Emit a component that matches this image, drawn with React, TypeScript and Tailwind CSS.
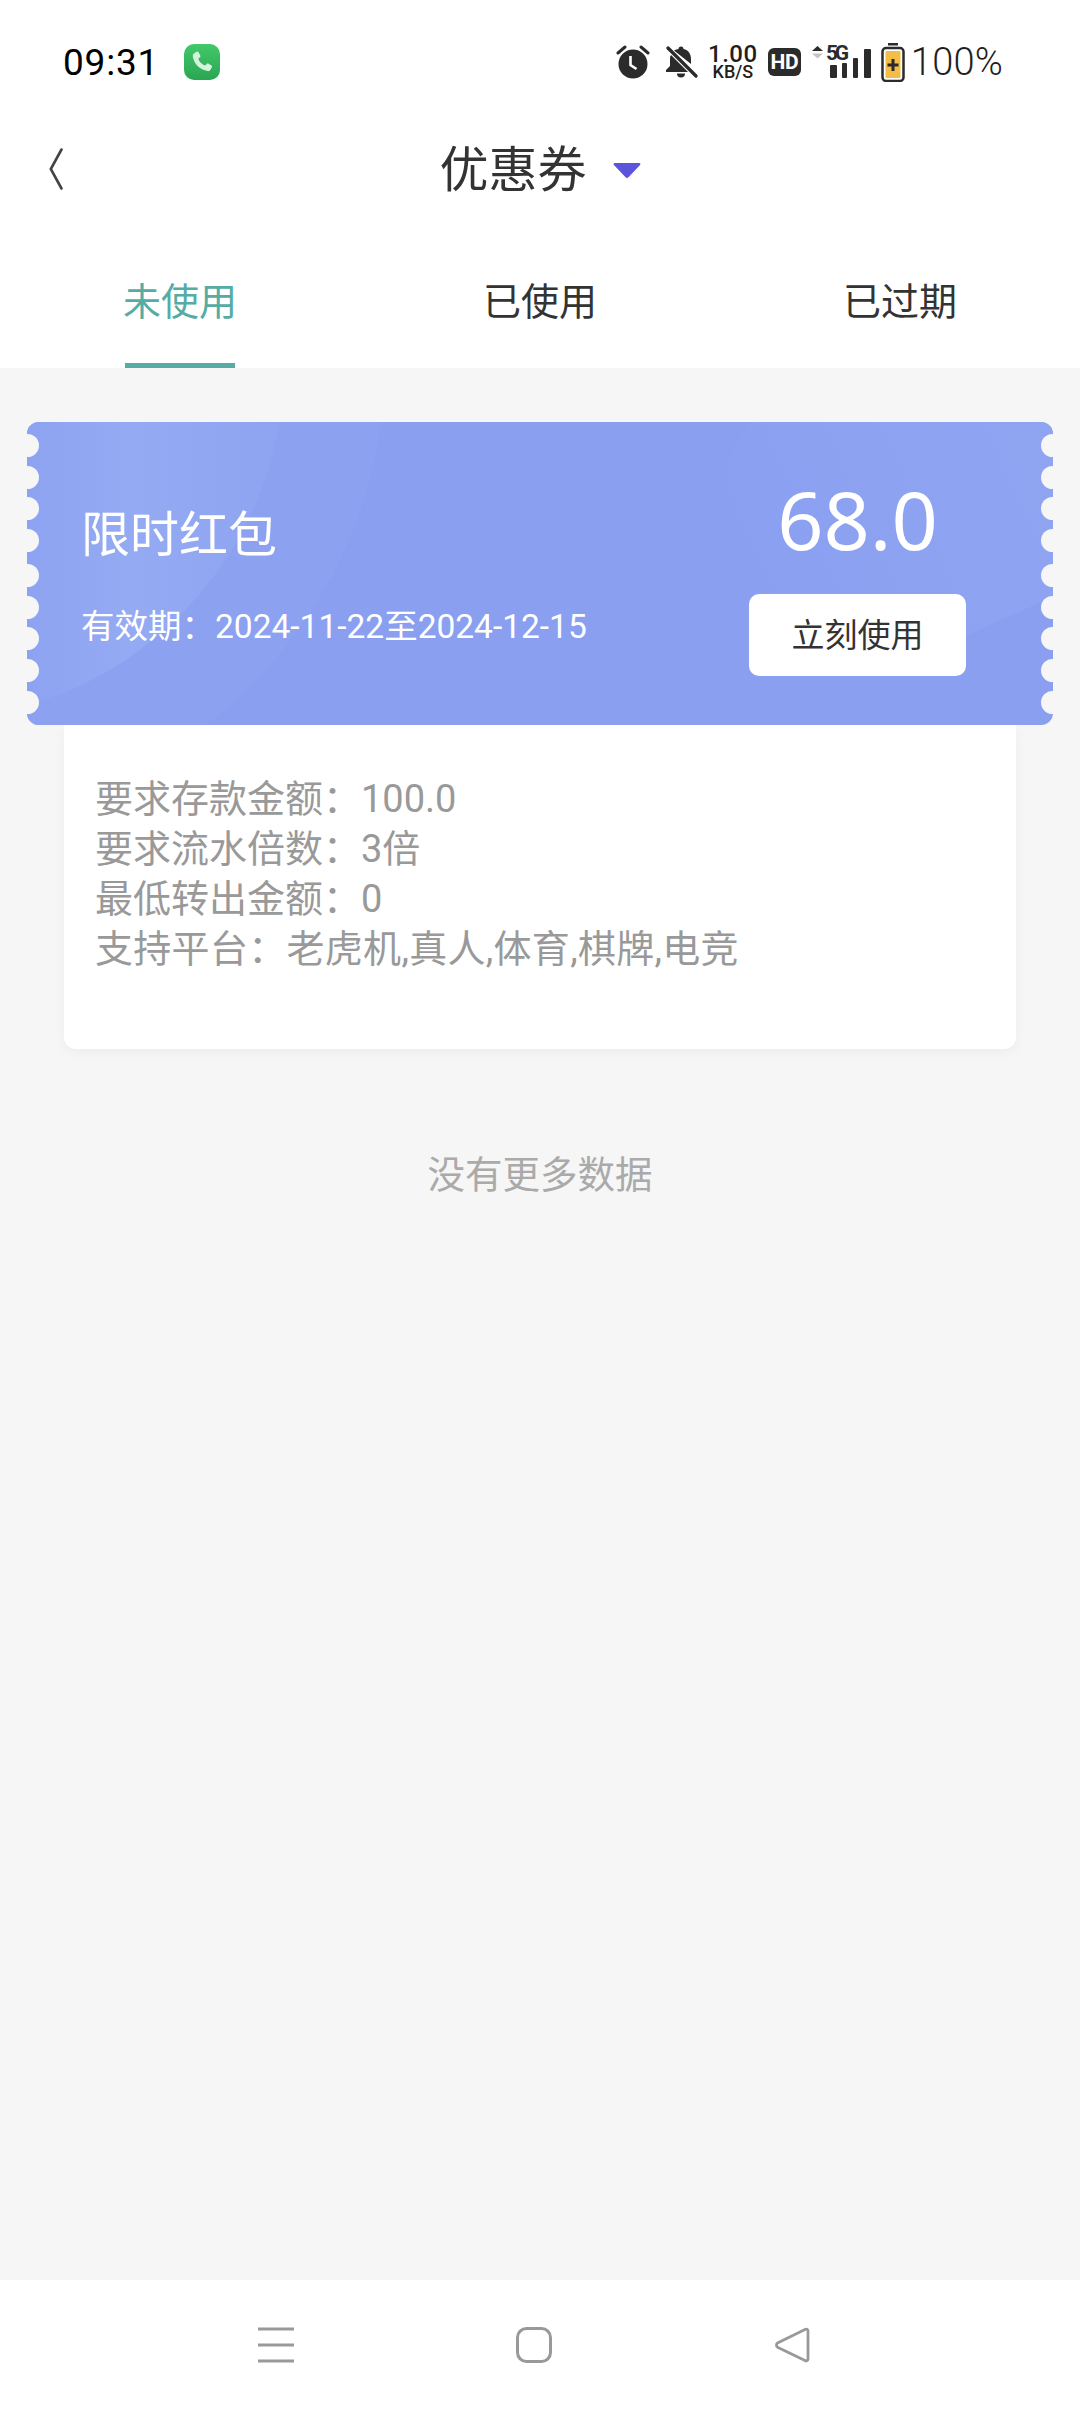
const scallops = [23, 55, 86, 118, 153, 185, 216, 248, 280];
const rules = [
  { text: "要求存款金额：100.0", tone: "tracking-normal" },
  { text: "要求流水倍数：3倍", tone: "tracking-normal" },
  { text: "最低转出金额：0", tone: "tracking-normal" },
  { text: "支持平台：老虎机,真人,体育,棋牌,电竞", tone: "tracking-[0.3px]" },
];

function StatusIcons() {
  return (
    <div className="flex items-center">
      {/* alarm clock */}
      <svg width="34" height="34" viewBox="0 0 34 34">
        <circle cx="17" cy="19" r="14.5" fill="#2b2b2b" />
        <path d="M14.5 11v9l6 4" fill="none" stroke="#fff" strokeWidth="2.6" />
        <path d="M2 8l7-6M32 8l-7-6" stroke="#2b2b2b" strokeWidth="3" strokeLinecap="round" />
      </svg>
      {/* muted bell */}
      <svg width="34" height="34" viewBox="0 0 34 34" className="ml-[15px]">
        <path d="M16 1.5a2.5 2.5 0 0 1 2.5 2.5c5 1 7.500 5 7.500 10v5L9 5.500C10.500 4.500 12 4 13.500 4A2.500 2.500 0 0 1 16 1.500zM6 10l17 17H1v-2l4-4v-8c0-1 .3-2 1-3zM12 28.500h8a4 4 0 0 1-8 0z" fill="#2b2b2b" />
        <path d="M3 3l28 28" stroke="#2b2b2b" strokeWidth="3.400" strokeLinecap="round" />
      </svg>
      <div className="ml-[10px] flex w-[48px] flex-col items-center font-['Roboto'] font-medium text-[#1f1f1f]">
        <span className="text-[24px] leading-[19px] tracking-[0.5px]">1.00</span>
        <span className="text-[18px] leading-[15px]">KB/S</span>
      </div>
      <div className="ml-[11px] flex h-[28px] w-[33px] items-center justify-center rounded-[6px] bg-[#2b2b2b] font-['Roboto'] text-[21px] leading-none font-bold tracking-[-0.5px] text-white">
        HD
      </div>
      {/* 5G with signal bars */}
      <svg width="62" height="36" viewBox="0 0 62 36" className="ml-[11px] overflow-visible">
        <path d="M0 7l5.500-5 5.500 5z" fill="#2b2b2b" />
        <path d="M0 9.500l5.500 5 5.500-5z" fill="#c4c4c4" />
        <text x="14" y="16" fontFamily="Roboto" fontWeight="700" fontSize="21" fill="#2b2b2b" textLength="23">5G</text>
        <rect x="18" y="21" width="7" height="13" rx="1" fill="#2b2b2b" />
        <rect x="30" y="19" width="5" height="15" rx="1" fill="#2b2b2b" />
        <rect x="41" y="14" width="5" height="20" rx="1" fill="#2b2b2b" />
        <rect x="52" y="5" width="7" height="29" rx="1" fill="#2b2b2b" />
      </svg>
      {/* charging battery */}
      <svg width="24" height="40" viewBox="0 0 24 40" className="ml-[7px]">
        <rect x="7" y="1" width="10" height="2.500" fill="#2b2b2b" />
        <rect x="1.500" y="6" width="21" height="33" rx="3.500" fill="#fff" stroke="#2b2b2b" strokeWidth="2.500" />
        <rect x="4.500" y="9" width="15" height="27" rx="1" fill="#f4bd45" />
        <path d="M12 17v12M6.500 23h11" stroke="#2b2b2b" strokeWidth="3" />
      </svg>
      <span className="ml-[6px] font-['Roboto'] text-[38px] leading-none font-light tracking-[0.2px] text-[#1f1f1f]">100%</span>
    </div>
  );
}

export default function App() {
  return (
    <div className="flex h-[2412px] w-[1080px] flex-col overflow-hidden bg-[#f6f6f6] font-['Roboto','Noto_Sans_CJK_SC',sans-serif]">
      <header className="bg-white">
        <div className="flex h-[124px] items-center justify-between pr-[77px] pl-[63px]">
          <div className="flex items-center">
            <span className="text-[37px] leading-none font-normal tracking-[0.8px] text-black">09:31</span>
            <div className="ml-[25px] flex h-[36px] w-[36px] items-center justify-center rounded-[10px] bg-gradient-to-b from-[#43c86a] to-[#2aa653]">
              <svg width="24" height="24" viewBox="0 0 24 24">
                <path d="M3.500 3.800 6.600 1.800c.8-.4 1.500-.2 1.900.5l1.800 3.200c.3.600.2 1.300-.3 1.700L8.300 8.400c.7 2.900 3.700 6 6.900 7l1.400-1.500c.5-.5 1.100-.6 1.700-.3l3.100 1.800c.7.400.9 1.200.5 1.900l-1.600 2.800c-.5.800-1.400 1.200-2.300 1C9.500 19.800 3.900 13.800 2.800 6.300c-.1-1 .1-1.900.7-2.500z" fill="#d5f2dc" />
              </svg>
            </div>
          </div>
          <StatusIcons />
        </div>

        <div className="relative flex h-[92px] items-center justify-center">
          <svg width="14" height="42" viewBox="0 0 14 42" className="absolute top-[24px] left-[49px]">
            <path d="M12.500 1.500 1.800 21l10.700 19.500" fill="none" stroke="#444" strokeWidth="2.600" strokeLinecap="round" />
          </svg>
          <span className="text-[49px] leading-none text-[#333]">优惠券</span>
          <svg width="28" height="17" viewBox="0 0 30 18" className="ml-[26px]">
            <path d="M2 1h26c1.300 0 1.900 1.300 1 2.200L16.300 16.500c-.7.700-1.900.7-2.600 0L1 3.200C.1 2.300.7 1 2 1z" fill="#5b54dc" />
          </svg>
        </div>

        <nav className="grid h-[152px] grid-cols-3 pt-[36px]">
          <div className="flex flex-col items-center justify-between">
            <span className="mt-[26px] text-[38px] leading-[48px] text-[#55aca4]">未使用</span>
            <span className="h-[5px] w-[110px] bg-[#55aca4]" />
          </div>
          <div className="flex justify-center">
            <span className="mt-[26px] text-[38px] leading-[48px] text-[#333]">已使用</span>
          </div>
          <div className="flex justify-center">
            <span className="mt-[26px] text-[38px] leading-[48px] text-[#333]">已过期</span>
          </div>
        </nav>
      </header>

      <main className="flex-1 px-[27px] pt-[54px]">
        <section className="relative h-[303px] rounded-[12px] bg-[#8a9ff0]">
          {/* soft background shapes of the ticket */}
          <div className="absolute inset-0 overflow-hidden rounded-[12px]">
            <div className="absolute top-[-518px] left-[-558px] h-[916px] w-[916px] rounded-full bg-[#8ca1f0]" />
            <div className="absolute top-[-418px] left-[-458px] h-[716px] w-[716px] rounded-full bg-gradient-to-r from-[#8aa0f0] from-[58%] via-[#94aaf3] via-[78%] to-[#8fa4f1]" />
            <div className="absolute top-[-110px] left-[680px] h-[300px] w-[560px] -rotate-[24deg] rounded-full bg-gradient-to-r from-[#8a9ff0] to-[#93a8f2]" />
          </div>
          {scallops.map((top) => (
            <span key={`l${top}`} className="absolute left-[-11px] h-[23px] w-[23px] rounded-full bg-[#f6f6f6]" style={{ top: top - 11 }} />
          ))}
          {scallops.map((top) => (
            <span key={`r${top}`} className="absolute right-[-11px] h-[23px] w-[23px] rounded-full bg-[#f6f6f6]" style={{ top: top - 11 }} />
          ))}
          <div className="relative flex h-full justify-between pr-[87px] pl-[54px]">
            <div className="flex flex-col pt-[86px] text-white">
              <h2 className="text-[49px] leading-[56px] font-normal">限时红包</h2>
              <p className="mt-[43px] text-[33.500px] leading-[40px]">有效期：2024-11-22至2024-12-15</p>
            </div>
            <div className="flex flex-col items-center pt-[49px]">
              <span className="font-['Noto_Sans',sans-serif] text-[81px] leading-[96px] text-white">68.0</span>
              <button className="mt-[27px] h-[82px] w-[217px] rounded-[10px] bg-white pt-[2px] text-[33px] text-[#333]">立刻使用</button>
            </div>
          </div>
        </section>

        <section className="mx-[37px] rounded-b-[12px] bg-white pt-[49px] pr-[31px] pb-[75px] pl-[31px] shadow-[0_4px_12px_rgba(0,0,0,0.04)]">
          {rules.map((line) => (
            <p key={line.text} className={`text-[38px] leading-[50px] text-[#999] ${line.tone}`}>{line.text}</p>
          ))}
        </section>

        <p className="mt-[100px] text-center text-[37.500px] leading-[52px] text-[#aaa]">没有更多数据</p>
      </main>

      <footer className="flex h-[132px] items-center bg-white pb-[2px]">
        <div className="flex w-full items-center pl-[258px]">
          <svg width="36" height="36" viewBox="0 0 36 36">
            <path d="M0 2h36M0 18h36M0 34h36" stroke="#999" strokeWidth="3.200" />
          </svg>
          <svg width="36" height="36" viewBox="0 0 36 36" className="ml-[222px]">
            <rect x="1.500" y="1.500" width="33" height="33" rx="9" fill="none" stroke="#999" strokeWidth="3" />
          </svg>
          <svg width="36" height="36" viewBox="0 0 36 36" className="ml-[222px]">
            <path d="M31 2.500c1.400-.9 3-.1 3 1.500v28c0 1.600-1.600 2.400-3 1.500L3.500 20.200c-1.400-1-1.400-3.300 0-4.300z" fill="none" stroke="#999" strokeWidth="2.800" strokeLinejoin="round" />
          </svg>
        </div>
      </footer>
    </div>
  );
}
